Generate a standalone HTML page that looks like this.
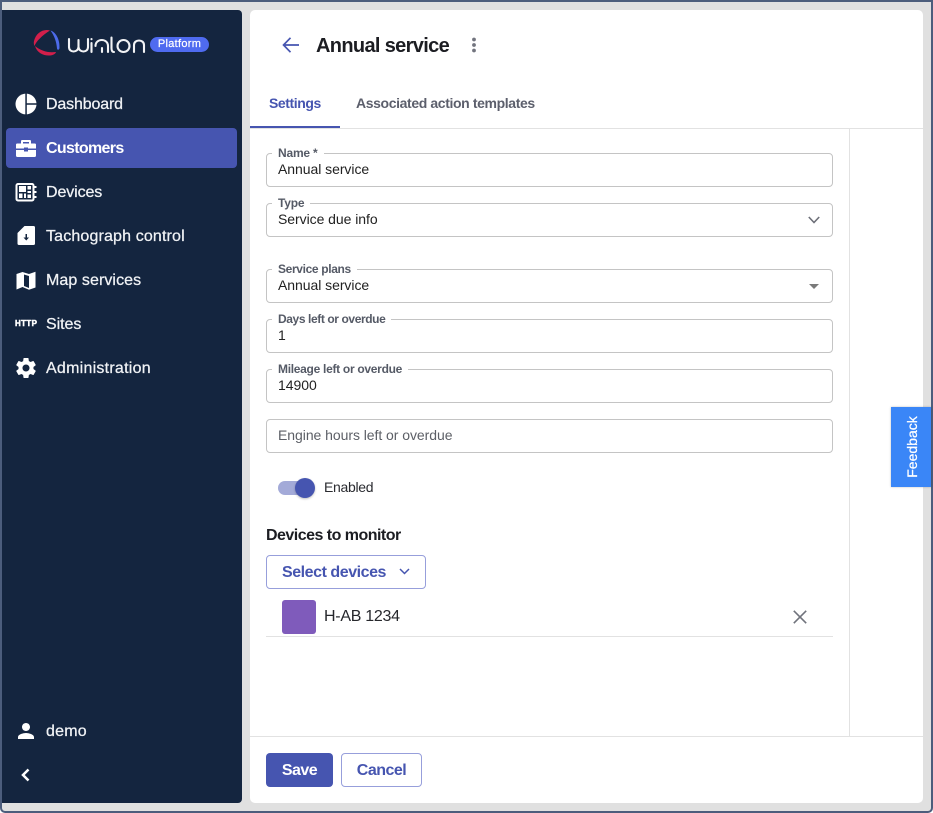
<!DOCTYPE html>
<html><head><meta charset="utf-8">
<style>
*{box-sizing:border-box}
html,body{margin:0;padding:0;width:933px;height:813px;overflow:hidden;background:#fff;font-family:"Liberation Sans",sans-serif}
.abs,.t{position:absolute}
.t{white-space:nowrap;line-height:18px}
#frame{position:absolute;left:0;top:0;width:933px;height:813px;background:#e0e0e0;border:2px solid #4c5d7c;border-radius:0 0 5px 5px;border-top-width:2px}
#side{position:absolute;left:2px;top:10px;width:240px;height:793px;background:#14253f;border-radius:0 4px 4px 0}
#main{position:absolute;left:250px;top:10px;width:673px;height:793px;background:#fff;border-radius:5px}
.nav{color:#f0f2f5;font-size:16px;left:46px;-webkit-text-stroke:.25px #f0f2f5}
.field{position:absolute;left:266px;width:567px;height:34px;border:1px solid #c4c4c4;border-radius:4px;background:#fff}
.lab{position:absolute;left:272px;background:#fff;padding:0 6px;font-size:12px;font-weight:bold;color:#555a66;line-height:12px;white-space:nowrap}
.val{font-size:14px;color:#222;left:278px;letter-spacing:-.05px}
svg{position:absolute;overflow:visible}
</style></head><body>
<div id="frame"></div>
<div id="side"></div>
<div id="main"></div>

<!-- logo -->
<svg style="left:0;top:0" width="70" height="70" viewBox="0 0 70 70">
<path d="M50 30.500C43 28.500 36 33 34 41C33.500 43 34 45 34.500 46C36 41.500 42 35.500 50 30.500Z" fill="#d21f4b"/>
<path d="M35 46C37 53 44 56 50 55.500C53 55.200 55.500 54 56 52C48 53 41 51 35 46Z" fill="#d21f4b"/>
<path d="M50.500 30.500C56 32 60 40 59.500 48C59.300 50 57.500 50.500 57 48.500C56.500 42 54.500 36 50.500 30.500Z" fill="#4d6bea"/>
</svg>
<svg style="left:67px;top:36px" width="78" height="18" viewBox="0 0 78 18" fill="none" stroke="#f2f3f5" stroke-width="2.100" stroke-linecap="round">
<path d="M2 3V11C2 17 11 17 11.500 11V4M11.500 11C12 17 21 17 21 11V3"/>
<path d="M24.500 7V16M24.500 3V3.200"/>
<path d="M28.500 10C28.500 2 41 2 41 10V16M35 12V16"/>
<path d="M44.500 1.500V12C44.500 15 45.500 16 47 16"/>
<circle cx="56.500" cy="10" r="6"/>
<path d="M67 16V9C67 3 77 3 77 9V16"/>
</svg>
<div class="abs" style="left:150px;top:37px;width:59px;height:15px;border-radius:8px;background:#4f6bf0"></div>
<div class="t" style="left:150px;top:37px;width:59px;height:15px;line-height:15px;text-align:center;font-size:11px;color:#fff;letter-spacing:.3px;-webkit-text-stroke:.2px #fff">Platform</div>

<!-- nav active -->
<div class="abs" style="left:6px;top:128px;width:231px;height:40px;background:#4655b0;border-radius:4px"></div>

<!-- dashboard icon -->
<svg style="left:15px;top:93px" width="22" height="22" viewBox="0 0 22 22" fill="#fff">
<path d="M10.300 .6V21.400C4.800 21 .5 16.500 .5 11S4.800 1 10.300 .6Z"/>
<path d="M11.800 .6C17 1 21 5 21.500 10.300H11.800Z"/>
<path d="M11.800 11.800H21.500C21 17 17 21 11.800 21.400Z"/>
</svg>
<div class="t nav" style="top:96px;letter-spacing:-.15px">Dashboard</div>

<!-- customers icon -->
<svg style="left:16px;top:139px" width="20" height="20" viewBox="0 0 20 20" fill="#fff">
<path d="M6 1H14C14.500 1 15 1.500 15 2V4.500H19C19.500 4.500 20 5 20 5.500V9.500H12V8.500H8V9.500H0V5.500C0 5 .5 4.500 1 4.500H5V2C5 1.500 5.500 1 6 1ZM7 3V4.500H13V3Z" fill-rule="evenodd"/>
<path d="M0 11H8V12.500H12V11H20V16.500C20 17.500 19.500 18 18.500 18H1.500C.5 18 0 17.500 0 16.500Z"/>
</svg>
<div class="t nav" style="top:140px;font-weight:bold;color:#fff;-webkit-text-stroke:0;letter-spacing:-.67px">Customers</div>

<!-- devices icon -->
<svg style="left:15px;top:181px" width="22" height="22" viewBox="0 0 22 22">
<rect x="1.500" y="3" width="17" height="16.500" rx="1.500" fill="none" stroke="#fff" stroke-width="2"/>
<path d="M4 5H11V11H4ZM4 12.500H7.500V17H4ZM9 12.500H11V17H9ZM12.500 5H16V8.500H12.500ZM12.500 10H16V12H12.500ZM12.500 13.500H16V17H12.500Z" fill="#fff"/>
<path d="M19.500 5H21.500V7H19.500ZM19.500 10H21.500V12H19.500ZM19.500 15H21.500V17H19.500Z" fill="#fff"/>
</svg>
<div class="t nav" style="top:184px;letter-spacing:-.1px">Devices</div>

<!-- tachograph icon -->
<svg style="left:17px;top:225px" width="18" height="22" viewBox="0 0 18 22">
<path d="M7.500 1H16.500C17.500 1 18 1.500 18 2.500V18.500C18 19.500 17.500 20 16.500 20H2C1 20 .5 19.500 .5 18.500V8Z" fill="#fff"/>
<path d="M8.500 9H10V12.500H12L9.250 15.500 6.500 12.500H8.500Z" fill="#14253f"/>
</svg>
<div class="t nav" style="top:228px;letter-spacing:.15px">Tachograph control</div>

<!-- map icon -->
<svg style="left:16px;top:271px" width="20" height="20" viewBox="0 0 20 20" fill="#fff">
<path d="M.5 3L6.500 1V16L.5 18.500Z"/>
<path d="M13 3L19.500 .8V16.500L13 18.800Z"/>
<path d="M6.500 1L13 3V5L8 3.500V15L13 17V18.800L6.500 16Z"/>
</svg>
<div class="t nav" style="top:272px;letter-spacing:.08px">Map services</div>

<!-- http -->
<div class="t" style="left:15px;top:317px;font-size:8px;line-height:13px;font-weight:bold;color:#fff;letter-spacing:.35px;-webkit-text-stroke:.5px #fff">HTTP</div>
<div class="t nav" style="top:316px;letter-spacing:-.05px">Sites</div>

<!-- gear -->
<svg style="left:14px;top:356px" width="24" height="24" viewBox="0 0 24 24" fill="#fff">
<path d="M19.430 12.980c.04-.32.07-.64.07-.98s-.03-.66-.07-.98l2.110-1.650c.19-.15.240-.42.120-.64l-2-3.460c-.12-.22-.39-.3-.61-.22l-2.490 1c-.52-.4-1.080-.73-1.690-.98l-.38-2.650C14.460 2.180 14.250 2 14 2h-4c-.25 0-.46.18-.49.420l-.38 2.650c-.61.25-1.170.59-1.690.98l-2.490-1c-.23-.09-.49 0-.61.220l-2 3.460c-.13.220-.07.490.12.640l2.110 1.650c-.04.32-.07.650-.07.980s.03.660.07.980l-2.110 1.650c-.19.150-.24.420-.12.640l2 3.460c.12.220.39.300.61.220l2.490-1c.52.400 1.080.730 1.690.980l.38 2.650c.03.240.24.420.49.420h4c.25 0 .46-.18.49-.42l.38-2.650c.61-.25 1.170-.59 1.690-.98l2.490 1c.23.090.49 0 .61-.22l2-3.460c.12-.22.070-.49-.12-.64l-2.110-1.650zM12 15.500c-1.930 0-3.500-1.570-3.500-3.500s1.570-3.500 3.500-3.500 3.500 1.570 3.500 3.500-1.570 3.500-3.500 3.500z"/>
</svg>
<div class="t nav" style="top:360px;letter-spacing:.25px">Administration</div>

<!-- user -->
<svg style="left:14px;top:719px" width="24" height="24" viewBox="0 0 24 24" fill="#fff">
<path d="M12 12c2.210 0 4-1.790 4-4s-1.790-4-4-4-4 1.790-4 4 1.790 4 4 4zm0 2c-2.670 0-8 1.340-8 4v2h16v-2c0-2.660-5.330-4-8-4z"/>
</svg>
<div class="t nav" style="top:723px;letter-spacing:.2px">demo</div>
<svg style="left:19px;top:768px" width="12" height="14" viewBox="0 0 12 14" fill="none" stroke="#fff" stroke-width="2.500"><path d="M9.500 1.500L4 7l5.500 5.500"/></svg>

<!-- header -->
<svg style="left:281px;top:35px" width="20" height="20" viewBox="0 0 20 20" fill="none" stroke="#4655b0" stroke-width="1.700"><path d="M18 10H3M9.500 2.800L2.500 10l7 7.200"/></svg>
<div class="t" style="left:316px;top:34px;line-height:24px;font-size:20px;font-weight:bold;color:#1c1d22;letter-spacing:-.66px">Annual service</div>
<svg style="left:471px;top:37px" width="6" height="16" viewBox="0 0 6 16" fill="#72747e"><circle cx="3" cy="2.500" r="1.900"/><circle cx="3" cy="8" r="1.900"/><circle cx="3" cy="13.500" r="1.900"/></svg>

<!-- tabs -->
<div class="t" style="left:269px;top:94px;font-size:14px;font-weight:bold;color:#4655b0;letter-spacing:-.42px">Settings</div>
<div class="t" style="left:356px;top:94px;font-size:14px;font-weight:bold;color:#5c5f6c;letter-spacing:-.38px">Associated action templates</div>
<div class="abs" style="left:250px;top:128px;width:673px;height:1px;background:#e2e2e2"></div>
<div class="abs" style="left:250px;top:126px;width:90px;height:2px;background:#4655b0"></div>
<div class="abs" style="left:849px;top:129px;width:1px;height:607px;background:#e2e2e2"></div>
<div class="abs" style="left:250px;top:736px;width:673px;height:1px;background:#e2e2e2"></div>

<!-- fields -->
<div class="field" style="top:153px"></div>
<div class="lab" style="top:147px;letter-spacing:-.2px">Name *</div>
<div class="t val" style="top:160px">Annual service</div>

<div class="field" style="top:203px"></div>
<div class="lab" style="top:197px;letter-spacing:-.2px">Type</div>
<div class="t val" style="top:210px">Service due info</div>
<svg style="left:808px;top:216px" width="12" height="8" viewBox="0 0 12 8" fill="none" stroke="#6d6f78" stroke-width="1.600"><path d="M.8 1L6 6.500 11.200 1"/></svg>

<div class="field" style="top:269px"></div>
<div class="lab" style="top:263px;letter-spacing:-.35px">Service plans</div>
<div class="t val" style="top:276px">Annual service</div>
<svg style="left:809px;top:284px" width="10" height="5" viewBox="0 0 10 5" fill="#7a7a7a"><path d="M0 0H10L5 5Z"/></svg>

<div class="field" style="top:319px"></div>
<div class="lab" style="top:313px;letter-spacing:-.4px">Days left or overdue</div>
<div class="t val" style="top:326px">1</div>

<div class="field" style="top:369px"></div>
<div class="lab" style="top:363px;letter-spacing:-.29px">Mileage left or overdue</div>
<div class="t val" style="top:376px">14900</div>

<div class="field" style="top:419px"></div>
<div class="t val" style="top:426px;color:#5c5f66">Engine hours left or overdue</div>

<!-- toggle -->
<div class="abs" style="left:278px;top:481px;width:36px;height:14px;border-radius:7px;background:#a3aad8"></div>
<div class="abs" style="left:295px;top:478px;width:20px;height:20px;border-radius:50%;background:#4655b0;box-shadow:0 1px 2px rgba(0,0,0,.25)"></div>
<div class="t" style="left:324px;top:478px;font-size:14px;color:#2a2b30;letter-spacing:-.3px">Enabled</div>

<div class="t" style="left:266px;top:527px;font-size:16px;font-weight:bold;color:#1c1d22;letter-spacing:-.52px">Devices to monitor</div>

<div class="abs" style="left:266px;top:555px;width:160px;height:34px;border:1px solid #979fdb;border-radius:4px;background:#fff"></div>
<div class="t" style="left:282px;top:564px;font-size:16px;font-weight:bold;color:#4655b0;letter-spacing:-.45px">Select devices</div>
<svg style="left:399px;top:568px" width="11" height="7" viewBox="0 0 11 7" fill="none" stroke="#4655b0" stroke-width="1.500"><path d="M1 1L5.500 5.500 10 1"/></svg>

<div class="abs" style="left:282px;top:600px;width:34px;height:34px;border-radius:3px;background:#7f5bbb"></div>
<div class="t" style="left:324px;top:608px;font-size:16px;color:#26272c;letter-spacing:-.28px">H-AB 1234</div>
<svg style="left:793px;top:610px" width="14" height="14" viewBox="0 0 14 14" fill="none" stroke="#70737c" stroke-width="1.600"><path d="M.8 .8L13.200 13.200M13.200 .8L.8 13.200"/></svg>
<div class="abs" style="left:266px;top:636px;width:567px;height:1px;background:#e2e2e2"></div>

<!-- footer -->
<div class="abs" style="left:266px;top:753px;width:67px;height:34px;border-radius:4px;background:#4655b0"></div>
<div class="t" style="left:266px;top:762px;width:67px;text-align:center;font-size:16px;font-weight:bold;color:#fff;letter-spacing:-.5px">Save</div>
<div class="abs" style="left:341px;top:753px;width:81px;height:34px;border:1px solid #979fdb;border-radius:4px;background:#fff"></div>
<div class="t" style="left:341px;top:762px;width:81px;text-align:center;font-size:16px;font-weight:bold;color:#4655b0;letter-spacing:-.5px">Cancel</div>

<!-- feedback -->
<div class="abs" style="left:891px;top:407px;width:40px;height:80px;background:#3a86f7;box-shadow:0 0 2px rgba(0,0,0,.25)"></div>
<div class="t" style="left:872px;top:438px;width:80px;height:18px;text-align:center;font-size:14px;color:#fff;transform:rotate(-90deg);-webkit-text-stroke:.25px #fff">Feedback</div>
</body></html>
